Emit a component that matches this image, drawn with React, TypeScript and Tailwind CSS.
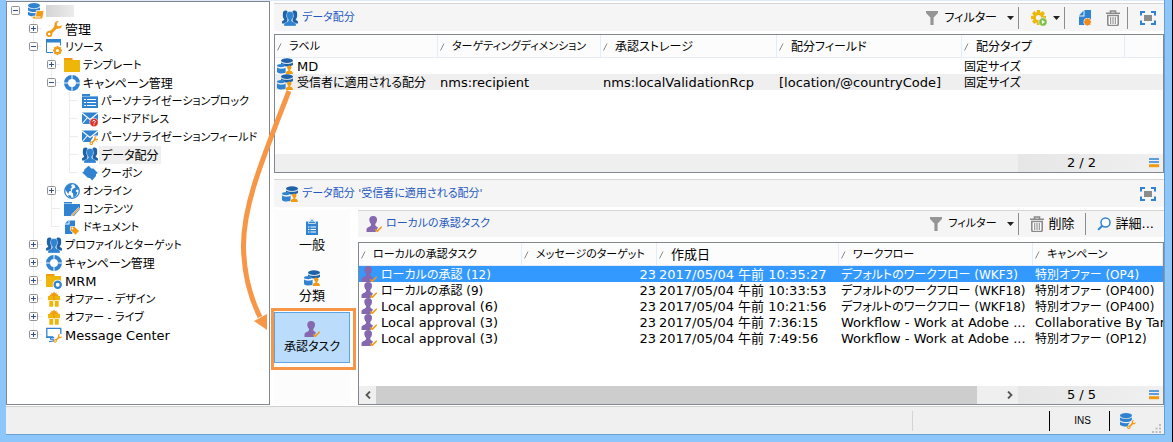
import type { ReactNode } from "react";

const BLUE = "#2f83d0";
const DARK = "#1f62a8";
const ORANGE = "#f29a12";
const YELLOW = "#efb60a";
const PURPLE = "#8568b0";

function Icon({ children, size = 16 }: { children: ReactNode; size?: number }) {
  return (
    <svg className="block shrink-0" width={size} height={size} viewBox="0 0 16 16" aria-hidden="true">
      {children}
    </svg>
  );
}

const Wrench = ({ at, color = ORANGE }: { at: string; color?: string }) => (
  <g transform={at}>
    <path d="M15.8 4.2 12.6 5.6 10.8 4.2 11 1.8 13 0.2C10.5-.3 8.3 1.5 8.4 4.2c0 .9.1 1.2-.4 1.8L5.4 9.1c-.6.6-1 .6-1.8.6C1.600 9.600 0 11.100 0 13s1.400 3.100 3.200 3.100c1.900 0 3.200-1.500 3.100-3.400 0-.7.1-1 .6-1.500l3-2.800c.6-.6 1-.6 1.800-.6 2.300.1 4.100-1.300 4.100-3.600zM3.200 14.300a1.300 1.300 0 1 1 0-2.600 1.300 1.300 0 0 1 0 2.600z" fill={color} fillRule="evenodd" />
  </g>
);

const DbDisk = () => (
  <g>
    <ellipse cx="6" cy="2.600" rx="6" ry="2.600" fill={BLUE} />
    <path d="M0 4.200c1.500 2.200 10.500 2.200 12 0v3c-1.500 2.400-10.500 2.400-12 0z" fill={BLUE} />
    <path d="M0 8.600c1.500 2.200 10.500 2.200 12 0v3.200c-1.500 2.400-10.500 2.400-12 0z" fill={BLUE} />
  </g>
);

const Gear = ({ cx, cy, r, color, hole }: { cx: number; cy: number; r: number; color: string; hole: string }) => (
  <g transform={`translate(${cx} ${cy}) scale(${r / 8})`}>
    {[0, 45, 90, 135].map((a) => (
      <rect key={a} x="-1.800" y="-8" width="3.600" height="16" fill={color} transform={`rotate(${a})`} />
    ))}
    <circle r="5.800" fill={color} />
    <circle r="2.800" fill={hole} />
  </g>
);

const RootIcon = () => (
  <Icon>
    <DbDisk />
    <path d="M8.500 7.600h7.500l-1 5.800c-.3 1.800-1.200 2.600-2.800 2.600H6c-1.400 0-1.900-1.500-1.200-2.800h2.700z" fill={ORANGE} stroke="#fff" strokeWidth=".8" />
    <path d="M7 14h5.500" stroke="#fff" strokeWidth="1" />
  </Icon>
);
const WrenchIcon = () => (
  <Icon>
    <Wrench at="" />
  </Icon>
);
const ResourceIcon = () => (
  <Icon>
    <path d="M.5 1h14v5.500M.5 1v12.500h6.500" fill="none" stroke={BLUE} strokeWidth="1" />
    <rect y="0" width="15" height="3.500" fill={BLUE} />
    <Gear cx={11.5} cy={11.5} r={4.5} color={ORANGE} hole="#fff" />
  </Icon>
);
const FolderIcon = () => (
  <Icon>
    <rect y="1" width="8.500" height="2" fill={ORANGE} />
    <rect y="3" width="16" height="12" fill={YELLOW} />
  </Icon>
);
const RingIcon = () => (
  <Icon>
    <circle cx="8" cy="8" r="6" fill="none" stroke={BLUE} strokeWidth="4" />
    <path d="M8 0v4.500M8 11.500V16M0 8h4.500M11.500 8H16" stroke="#fff" strokeWidth="1" />
  </Icon>
);
const BlockIcon = () => (
  <Icon>
    <path d="M0 1h8v2h8v12H0z" fill={BLUE} />
    <path d="M0 3.400h16" stroke="#9cc6ec" strokeWidth=".8" />
    <path d="M2 6.500h2M5 6.500h9M2 9.500h2M5 9.500h9M2 12.500h2M5 12.500h9" stroke="#fff" strokeWidth="1.200" />
  </Icon>
);
const Envelope = () => (
  <g>
    <rect y="1.500" width="16" height="11.500" fill={BLUE} />
    <path d="M0 2l8 6.500L16 2M0 13l5.500-6.500M16 13l-5.500-6.500" fill="none" stroke="#fff" strokeWidth="1.100" />
  </g>
);
const SeedIcon = () => (
  <Icon>
    <Envelope />
    <circle cx="12" cy="11.500" r="4.300" fill="#e0302c" stroke="#fff" strokeWidth=".6" />
    <path d="M10.700 10.600c0-1.700 2.700-1.500 2.600 0 0 .9-1.300.9-1.300 2M12 13.300v1" fill="none" stroke="#fff" strokeWidth="1" />
  </Icon>
);
const FieldIcon = () => (
  <Icon>
    <Envelope />
    <path d="M7 16 9.500 10.500 12 6.500h4V12l-3.500 1.500L9 16z" fill="#fff" />
    <Wrench at="translate(7.500 7) scale(.56)" />
  </Icon>
);
const PeopleIcon = () => (
  <Icon>
    <path d="M1 2.600C1.200-.2 5-.2 5.600 1.800L4.400 6l1.200 4-1 3.500H0v-1.800c.2-1.200 2.200-1.300 2.400-2.300C.4 8 .8 4.800 1 2.600zM15 2.600c-.2-2.800-4-2.800-4.600-.8L11.600 6l-1.200 4 1 3.500H16v-1.800c-.2-1.200-2.200-1.300-2.400-2.300C15.600 8 15.200 4.800 15 2.600z" fill={DARK} />
    <path d="M8 1.500c2.600 0 3.700 1.600 3.400 4.200-.2 1.800-.8 3-1.700 3.900v1.400c.4 1.200 4.300 1.200 4.300 3.500V16H2v-1.500c0-2.300 3.900-2.300 4.300-3.500V9.600C5.400 8.700 4.800 7.500 4.600 5.700 4.300 3.100 5.400 1.500 8 1.500z" fill={BLUE} stroke="#fff" strokeWidth=".3" />
  </Icon>
);
const CouponIcon = () => (
  <Icon>
    <path d="M6.600.8 9.300 3.500 11.400 3.400 15.800 8 13.900 9.200 14 11.100 10.200 15.400 8 13 5.800 12.800.2 7.600 2.200 6.200 2.300 4.400z" fill={BLUE} />
  </Icon>
);
const GlobeIcon = () => (
  <Icon>
    <circle cx="8" cy="8" r="7.300" fill="#fff" stroke={BLUE} strokeWidth="1.300" />
    <path d="M1 6c1-3 3.500-5 7-5l-1 2 1.500 1-2 1.500L7 8 5 8.500 4.500 11 2.800 9zM10 1.300C13 2 15 4 15.200 7l-2.200-.5L11.500 8 13.500 9.500 12 13l-2.500 1.500-.5-4L7.500 9l1-3 3-1.500zM4 12l3 .5.500 2.500C5.500 15 4.600 13.800 4 12z" fill={BLUE} />
  </Icon>
);
const ContentIcon = () => (
  <Icon>
    <path d="M0 1h8v1.500H0zM0 3h16v5l-6 7H0z" fill={BLUE} />
    <path d="m15.500 7.500-7 7.500-1.500 1 .5-2.200 7-7.300z" fill={ORANGE} stroke="#fff" strokeWidth=".6" />
  </Icon>
);
const DocumentIcon = () => (
  <Icon>
    <path d="M5.500 1.500H11v8L8 15H1V5.500h4.500z" fill={BLUE} />
    <path d="M1 4.500 4.500 1v3.500z" fill={BLUE} />
    <path d="M6.500 7.500h4l5 4.500-4 4-5-4.500z" fill={ORANGE} stroke="#fff" strokeWidth=".7" />
    <circle cx="8.500" cy="9.500" r=".9" fill="#fff" />
  </Icon>
);
const MrmIcon = () => (
  <Icon>
    <rect y="1" width="8.500" height="2" fill={ORANGE} />
    <rect y="3" width="15" height="11" fill={YELLOW} />
    <circle cx="11.700" cy="11.700" r="5" fill="#fff" />
    <circle cx="11.700" cy="11.700" r="3.100" fill="none" stroke={BLUE} strokeWidth="2.200" />
  </Icon>
);
const GiftIcon = () => (
  <Icon>
    <path d="M3.800 3.500 6 3.200 4.600 1.500 7 2.300 8 .2 9 2.300 11.400 1.500 10 3.200l2.200.3V5H3.800z" fill={ORANGE} />
    <path d="M2 5h12v4.200H2zM3.300 10h3.900v5.700H3.300zM8.800 10h3.900v5.700H8.800z" fill={YELLOW} />
    <path d="M7.200 5h1.600v4.200H7.200z" fill={ORANGE} />
  </Icon>
);
const MessageIcon = () => (
  <Icon>
    <path d="M7 10H.8V1.300h14V7" fill="#fff" stroke={BLUE} strokeWidth="1.300" />
    <path d="M.2 10.300h8M4.500 10.500v1.700h2.700V14L3 14.600" fill="none" stroke={BLUE} strokeWidth="1.200" />
    <Wrench at="translate(7.500 7) scale(.53)" />
  </Icon>
);
const AllocationIcon = () => (
  <Icon>
    <ellipse cx="10" cy="2.600" rx="6" ry="2.400" fill={DARK} />
    <path d="M4 4.200c1.500 2 10.500 2 12 0v2.600c-1 1.400-5 2-8 1.400L7 6.900 4 6.300z" fill={DARK} />
    <ellipse cx="4" cy="7.600" rx="4" ry="1.600" fill={BLUE} />
    <path d="M0 9.300c1 1.800 7 1.800 8.600.2v5.100C6.500 16 1.500 15.800 0 14z" fill={BLUE} />
    <circle cx="12.300" cy="9.600" r="2.200" fill={ORANGE} />
    <path d="M11.400 10.500h1.800v2.200c2 .4 2.700 1 2.700 3.300H8.700c0-2.300.7-2.900 2.700-3.300z" fill={ORANGE} />
  </Icon>
);
const TaskIcon = () => (
  <Icon>
    <path d="M7.200 0c2.800 0 4.100 1.800 3.800 4.200-.2 1.500-.8 2.800-1.700 3.600v1.500c.4 1.400 2 1.300 2.700 2.100l-2.500 4.500H.5v-2.400c0-2.500 4.100-2.400 4.500-4.200V7.800C4.100 7 3.500 5.700 3.300 4.200 3 1.800 4.400 0 7.200 0z" fill={PURPLE} />
    <path d="m9.300 13.500 2 1.800 4.400-4.600" fill="none" stroke={ORANGE} strokeWidth="1.600" />
  </Icon>
);
const ClipboardIcon = () => (
  <Icon>
    <path d="M2 2.500h12V16H2z" fill={BLUE} />
    <path d="M4.500 4.500v-2H6.200C6.300-.5 9.700-.5 9.800 2.500h1.700v2z" fill={BLUE} stroke="#fff" strokeWidth=".7" />
    <circle cx="8" cy="2.200" r=".8" fill="#fff" />
    <path d="M4 8h1.500M6.500 8H12M4 10.500h1.500M6.500 10.500H12M4 13h1.500M6.500 13H12" stroke="#fff" strokeWidth="1" />
  </Icon>
);
const FunnelIcon = () => (
  <Icon>
    <path d="M2 1h12v2L9.600 7.500V15H6.400V7.500L2 3z" fill="#959595" />
  </Icon>
);
const TrashIcon = () => (
  <Icon>
    <path d="M5.500 2.800V1h5v1.800M1 3.300h14" fill="none" stroke="#8b8b8b" strokeWidth="1.600" />
    <path d="M2.800 5.500h10.400V14c0 1-.4 1.500-1.200 1.500H4c-.8 0-1.200-.5-1.200-1.500z" fill="#fff" stroke="#8b8b8b" strokeWidth="1.600" />
    <path d="M5.700 7v7M8 7v7M10.300 7v7" stroke="#8b8b8b" strokeWidth="1.100" />
  </Icon>
);
const GearRunIcon = () => (
  <Icon>
    <Gear cx={7.500} cy={7.500} r={7.500} color={YELLOW} hole="#f5f5f5" />
    <circle cx="12" cy="12" r="4.200" fill="#7cc243" stroke="#f5f5f5" strokeWidth=".7" />
    <path d="m10.800 9.800 3.200 2.200-3.200 2.200z" fill="#fff" />
  </Icon>
);
const NewIcon = () => (
  <Icon>
    <path d="M2 5.500 6.500.5v5zM7.500 0H14v15H2V6.500h5.500z" fill={BLUE} />
    <circle cx="10.500" cy="12" r="4" fill="#f5f5f5" />
    <g transform="translate(10.500 12)" fill="#f08c1e">
      <rect x="-2.800" y="-2.800" width="5.600" height="5.600" />
      <rect x="-2.800" y="-2.800" width="5.600" height="5.600" transform="rotate(45)" />
    </g>
  </Icon>
);
const ExpandIcon = () => (
  <Icon>
    <path d="M1 5.500V2h4M11 2h4v3.500M15 10.500V14h-4M5 14H1v-3.500" fill="none" stroke={BLUE} strokeWidth="2" />
    <rect x="4" y="5" width="8" height="6" fill="#8b8b8b" />
  </Icon>
);
const SearchIcon = () => (
  <Icon>
    <circle cx="9.500" cy="6.500" r="4.500" fill="#fff" stroke={BLUE} strokeWidth="1.500" />
    <path d="m6.300 9.700-4.200 4.200" stroke={BLUE} strokeWidth="2" />
  </Icon>
);
const StatusDbIcon = () => (
  <Icon>
    <DbDisk />
    <path d="M6.500 16 8 12l4-5.500h4V12l-4 2-3 2z" fill="#f0f0f0" />
    <Wrench at="translate(7 7) scale(.56)" />
  </Icon>
);
const ListIcon = () => (
  <svg width="10" height="10" viewBox="0 0 10 10" aria-hidden="true">
    <path d="M0 1h10M0 4h10" stroke={BLUE} strokeWidth="1.600" />
    <path d="M0 7.700h10" stroke={ORANGE} strokeWidth="3" />
  </svg>
);
const Caret = () => (
  <svg className="shrink-0" width="7" height="4" viewBox="0 0 7 4" aria-hidden="true">
    <path d="M0 0h7L3.500 4z" fill="#222" />
  </svg>
);
const SortMark = () => (
  <svg className="mr-1.5 shrink-0" width="6" height="8" viewBox="0 0 6 8" aria-hidden="true">
    <path d="M.5 7.500 4 .5" stroke="#8a8a8a" strokeWidth="1" />
  </svg>
);

type Line = "none" | "through" | "tee" | "end";

function Connector({ line, box }: { line: Line; box?: "+" | "-" }) {
  return (
    <svg className="block shrink-0" width="18" height="18" viewBox="0 0 18 18" aria-hidden="true">
      {(line === "through" || line === "tee") && <path d="M9.500 0v18" stroke="#ececec" />}
      {line === "end" && <path d="M9.500 0v9" stroke="#ececec" />}
      {(line === "tee" || line === "end") && <path d="M9 8.500h9" stroke="#ececec" />}
      {box && (
        <g>
          <rect x="5.500" y="4.500" width="8" height="8" rx="1" fill="#fafafa" stroke="#919191" />
          <path d={box === "+" ? "M7 8.500h5M9.500 6v5" : "M7 8.500h5"} stroke="#33518f" />
        </g>
      )}
    </svg>
  );
}

type Node = { icon: ReactNode; label: string; small?: boolean; lines: Line[]; box?: "+" | "-"; selected?: boolean };

const tree: Node[] = [
  { icon: <WrenchIcon />, label: "管理", lines: ["none", "tee"], box: "+" },
  { icon: <ResourceIcon />, label: "リソース", small: true, lines: ["none", "tee"], box: "-" },
  { icon: <FolderIcon />, label: "テンプレート", small: true, lines: ["none", "through", "tee"], box: "+" },
  { icon: <RingIcon />, label: "キャンペーン管理", lines: ["none", "through", "tee"], box: "-" },
  { icon: <BlockIcon />, label: "パーソナライゼーションブロック", small: true, lines: ["none", "through", "through", "tee"] },
  { icon: <SeedIcon />, label: "シードアドレス", small: true, lines: ["none", "through", "through", "tee"] },
  { icon: <FieldIcon />, label: "パーソナライゼーションフィールド", small: true, lines: ["none", "through", "through", "tee"] },
  { icon: <PeopleIcon />, label: "データ配分", lines: ["none", "through", "through", "tee"], selected: true },
  { icon: <CouponIcon />, label: "クーポン", small: true, lines: ["none", "through", "through", "end"] },
  { icon: <GlobeIcon />, label: "オンライン", small: true, lines: ["none", "through", "tee"], box: "+" },
  { icon: <ContentIcon />, label: "コンテンツ", small: true, lines: ["none", "through", "tee"] },
  { icon: <DocumentIcon />, label: "ドキュメント", small: true, lines: ["none", "through", "end"] },
  { icon: <PeopleIcon />, label: "プロファイルとターゲット", small: true, lines: ["none", "tee"], box: "+" },
  { icon: <RingIcon />, label: "キャンペーン管理", lines: ["none", "tee"], box: "+" },
  { icon: <MrmIcon />, label: "MRM", lines: ["none", "tee"], box: "+" },
  { icon: <GiftIcon />, label: "オファー - デザイン", small: true, lines: ["none", "tee"], box: "+" },
  { icon: <GiftIcon />, label: "オファー - ライブ", small: true, lines: ["none", "tee"], box: "+" },
  { icon: <MessageIcon />, label: "Message Center", lines: ["none", "end"], box: "+" },
];

// Latin-only and kanji-only labels are set one step larger than mixed text.
const isLarge = (s: string) => /^([\x00-\x7f]*|[\u4e00-\u9fff]+)$/.test(s);
const sizeOf = (s: string, small?: boolean) => (isLarge(s) ? "text-[13px]" : small ? "text-[11px]" : "text-xs");

function Tree() {
  return (
    <nav aria-label="エクスプローラー" className="w-[264px] shrink-0 overflow-hidden border border-[#828790] bg-white">
      <ul className="-ml-px">
        <li className="flex h-[18px] items-center">
          <Connector line="none" box="-" />
          <span className="ml-1">
            <RootIcon />
          </span>
          <span className="ml-0.5 h-3 w-7 bg-linear-to-r from-[#d4d4d4] to-[#ececec]" />
        </li>
        {tree.map((n, i) => (
          <li key={i} className="flex h-[18px] items-center whitespace-nowrap">
            {n.lines.map((l, j) => (
              <Connector key={j} line={l} box={j === n.lines.length - 1 ? n.box : undefined} />
            ))}
            <a href="#" className="ml-1 flex items-center">
              {n.icon}
              <span className={`ml-px px-0.5 pt-0.5 leading-4 ${sizeOf(n.label, n.small)} ${n.selected ? "bg-[#efefef]" : ""}`}>{n.label}</span>
            </a>
          </li>
        ))}
      </ul>
    </nav>
  );
}

const Divider = () => <span className="h-[22px] w-px shrink-0 bg-[#8c8c8c]" />;

function Title({ icon, children }: { icon: ReactNode; children: ReactNode }) {
  return (
    <h2 className="flex min-w-0 flex-1 items-center gap-1 pl-2 text-[11px] text-[#2458c0]">
      {icon}
      <span className="truncate">{children}</span>
    </h2>
  );
}

function FilterButton({ compact }: { compact?: boolean }) {
  return (
    <button className={`flex items-center gap-1 ${compact ? "text-[11px]" : "text-xs"}`}>
      <FunnelIcon />
      <span className="mr-1.5">フィルター</span>
      <Caret />
    </button>
  );
}

function CountBar({ count, children }: { count: string; children?: ReactNode }) {
  return (
    <div className="flex h-[18px] shrink-0 items-stretch bg-[#efefef]">
      <div className="flex min-w-0 flex-1 items-center">{children}</div>
      <div className="flex w-[145px] shrink-0 items-center bg-linear-to-r from-[#e6e6e6] to-[#f0f0f0] pr-1 text-[13px]">
        <span className="flex-1 pr-1 text-center">{count}</span>
        <button aria-label="表示設定">
          <ListIcon />
        </button>
      </div>
    </div>
  );
}

function HeadCell({ children, small = true }: { children: string; small?: boolean }) {
  return (
    <th className={`h-[23px] overflow-hidden border-r border-b border-[#e3ecf7] bg-[#fcfcfc] p-0 pt-0.5 pl-0.5 text-left font-normal ${sizeOf(children, small)}`}>
      <button className="flex items-center whitespace-nowrap">
        <SortMark />
        <span>{children}</span>
      </button>
    </th>
  );
}

const allocations = [
  ["MD", "", "", "", "固定サイズ"],
  ["受信者に適用される配分", "nms:recipient", "nms:localValidationRcp", "[location/@countryCode]", "固定サイズ"],
];

function AllocationTable() {
  return (
    <div className="mt-[3px] flex h-[139px] shrink-0 flex-col border border-[#828790] bg-white">
      <div className="flex-1 overflow-hidden">
        <table className="w-full table-fixed border-separate border-spacing-0">
          <colgroup>
            <col className="w-[163px]" />
            <col className="w-[163px]" />
            <col className="w-[176px]" />
            <col className="w-[185px]" />
            <col className="w-[163px]" />
            <col />
          </colgroup>
          <thead>
            <tr>
              <HeadCell>ラベル</HeadCell>
              <HeadCell>ターゲティングディメンション</HeadCell>
              <HeadCell small={false}>承認ストレージ</HeadCell>
              <HeadCell small={false}>配分フィールド</HeadCell>
              <HeadCell small={false}>配分タイプ</HeadCell>
              <td className="border-b border-[#e3ecf7] bg-[#fcfcfc]" />
            </tr>
          </thead>
          <tbody>
            {allocations.map((row, i) => (
              <tr key={i} className={i === 1 ? "bg-[#efefef]" : ""}>
                {row.map((c, j) => (
                  <td key={j} className={`h-4 overflow-hidden p-0 pl-0.5 leading-4 whitespace-nowrap ${sizeOf(c)}`}>
                    {j === 0 ? (
                      <span className="flex items-center gap-1">
                        <AllocationIcon />
                        <span className="pt-0.5 leading-[14px]">{c}</span>
                      </span>
                    ) : (
                      <span className="block pt-0.5 leading-[14px]">{c}</span>
                    )}
                  </td>
                ))}
                <td className="p-0" />
              </tr>
            ))}
          </tbody>
        </table>
      </div>
      <CountBar count="2 / 2" />
    </div>
  );
}

const tasks = [
  ["ローカルの承認 (12)", "23", "2017/05/04 午前 10:35:27", "デフォルトのワークフロー (WKF3)", "特別オファー (OP4)"],
  ["ローカルの承認 (9)", "23", "2017/05/04 午前 10:33:53", "デフォルトのワークフロー (WKF18)", "特別オファー (OP400)"],
  ["Local approval (6)", "23", "2017/05/04 午前 10:21:56", "デフォルトのワークフロー (WKF18)", "特別オファー (OP400)"],
  ["Local approval (3)", "23", "2017/05/04 午前 7:36:15", "Workflow - Work at Adobe ...", "Collaborative By Tar"],
  ["Local approval (3)", "23", "2017/05/04 午前 7:49:56", "Workflow - Work at Adobe ...", "特別オファー (OP12)"],
];

function TaskTable() {
  return (
    <div className="mt-[5px] flex min-h-[163px] flex-1 flex-col border border-[#828790] bg-white">
      <div className="flex-1 overflow-hidden">
        <table className="w-full table-fixed border-separate border-spacing-0">
          <colgroup>
            <col className="w-[163px]" />
            <col className="w-[135px]" />
            <col className="w-[182px]" />
            <col className="w-[194px]" />
            <col />
          </colgroup>
          <thead>
            <tr>
              <HeadCell>ローカルの承認タスク</HeadCell>
              <HeadCell>メッセージのターゲット</HeadCell>
              <HeadCell>作成日</HeadCell>
              <HeadCell>ワークフロー</HeadCell>
              <HeadCell>キャンペーン</HeadCell>
            </tr>
          </thead>
          <tbody>
            {tasks.map((row, i) => (
              <tr key={i} className={i === 0 ? "bg-[#3399ff] text-white" : ""}>
                {row.map((c, j) => (
                  <td
                    key={j}
                    className={`h-4 overflow-hidden p-0 leading-4 whitespace-nowrap ${j === 1 ? "pr-px text-right" : "pl-0.5"} ${j === 2 ? "text-[13px]" : sizeOf(c)}`}
                  >
                    {j === 0 ? (
                      <span className="flex items-center gap-1">
                        <TaskIcon />
                        <span className="pt-0.5 leading-[14px]">{c}</span>
                      </span>
                    ) : (
                      <span className="block pt-0.5 leading-[14px]">{c}</span>
                    )}
                  </td>
                ))}
              </tr>
            ))}
          </tbody>
        </table>
      </div>
      <CountBar count="5 / 5">
        <button aria-label="左へスクロール" className="flex w-[17px] justify-center">
          <svg width="6" height="8" viewBox="0 0 6 8">
            <path d="M5 .5 1.500 4 5 7.500" fill="none" stroke="#555" strokeWidth="1.800" />
          </svg>
        </button>
        <div className="flex h-full flex-1 pr-6">
          <div className="h-full w-full bg-[#cdcdcd]" />
        </div>
        <button aria-label="右へスクロール" className="flex w-[17px] justify-center">
          <svg width="6" height="8" viewBox="0 0 6 8">
            <path d="M1 .5 4.500 4 1 7.500" fill="none" stroke="#555" strokeWidth="1.800" />
          </svg>
        </button>
      </CountBar>
    </div>
  );
}

const sections = [
  { label: "一般", icon: <ClipboardIcon /> },
  { label: "分類", icon: <AllocationIcon /> },
  { label: "承認タスク", icon: <TaskIcon />, active: true },
];

function SideTabs() {
  return (
    <div className="mr-2 flex w-[76px] shrink-0 flex-col bg-[#fcfcfc]">
      {sections.map((s) => (
        <button
          key={s.label}
          className={`relative flex h-[51px] flex-col items-center justify-center gap-0.5 border ${sizeOf(s.label)} ${s.active ? "border-[#5fa4e4] bg-[#bbdcfb]" : "border-transparent"}`}
        >
          {s.icon}
          <span className="leading-4">{s.label}</span>
          {s.active && <span className="absolute -top-[5px] -right-[7px] -bottom-2 -left-1 border-3 border-[#f79646]" />}
        </button>
      ))}
    </div>
  );
}

function FlowArrow() {
  return (
    <svg className="pointer-events-none absolute top-0 left-0" width="300" height="340" viewBox="0 0 300 340" aria-hidden="true">
      <path d="M289 91C263 158 243 205 243.500 247C244 275 251 299 260 317" fill="none" stroke="#f79646" strokeWidth="5" />
      <path d="M254 321 267 314 267 330z" fill="#f79646" />
    </svg>
  );
}

export default function App() {
  return (
    <div
      lang="ja"
      className="relative flex min-h-screen flex-col border-r border-b-2 border-black bg-[#8dc6fa] pr-[7px] pb-[7px] pl-1.5 font-['DejaVu_Sans','Noto_Sans_CJK_JP',sans-serif] text-xs leading-4 text-black [font-feature-settings:'palt']"
    >
      <div className="flex flex-1 flex-col border-r border-b border-[#6a9fce] bg-white">
        <main className="flex flex-1 border-t border-[#dfeaf8]">
          <Tree />
          <div className="ml-1 flex min-w-0 flex-1 flex-col pt-0.5">
            <header className="flex h-7 items-center border-t border-[#d5d5d5] bg-[#f5f5f5]">
              <Title icon={<PeopleIcon />}>データ配分</Title>
              <div className="flex shrink-0 items-center pr-2">
                <FilterButton />
                <span className="w-1" />
                <Divider />
                <button aria-label="アクション" className="mx-1 flex items-center gap-1.5 pl-2">
                  <GearRunIcon />
                  <Caret />
                </button>
                <Divider />
                <button aria-label="新規" className="ml-3">
                  <NewIcon />
                </button>
                <button aria-label="削除" className="mr-1.5 ml-3">
                  <TrashIcon />
                </button>
                <Divider />
                <button aria-label="全画面" className="ml-3">
                  <ExpandIcon />
                </button>
              </div>
            </header>
            <AllocationTable />
            <header className="mt-1.5 flex h-7 shrink-0 items-center border-t border-[#d5d5d5] bg-[#f5f5f5]">
              <Title icon={<AllocationIcon />}>データ配分 '受信者に適用される配分'</Title>
              <button aria-label="全画面" className="mr-2">
                <ExpandIcon />
              </button>
            </header>
            <div className="mt-[3px] flex flex-1">
              <SideTabs />
              <div className="flex min-w-0 flex-1 flex-col">
                <header className="flex h-[27px] shrink-0 items-center border-t border-[#d5d5d5] bg-[#f5f5f5]">
                  <Title icon={<TaskIcon />}>ローカルの承認タスク</Title>
                  <div className="flex shrink-0 items-center gap-1 pr-2.5 text-[13px]">
                    <FilterButton compact />
                    <Divider />
                    <button className="flex items-center gap-1 pr-1.5 pl-1.5">
                      <TrashIcon />
                      <span>削除</span>
                    </button>
                    <Divider />
                    <button className="flex items-center gap-1 pl-1.5">
                      <SearchIcon />
                      <span>詳細...</span>
                    </button>
                  </div>
                </header>
                <TaskTable />
              </div>
            </div>
          </div>
        </main>
        <footer className="mt-px flex h-7 shrink-0 items-center justify-end border-t border-[#cfcfcf] bg-[#f0f0f0]">
          <span className="mr-[136px] h-5 w-px bg-[#d4d4d4]" />
          <span className="h-5 w-px bg-black" />
          <span className="w-[59px] pl-1.5 text-center font-['Liberation_Sans',sans-serif] text-[10px]">INS</span>
          <span className="mr-2.5 h-5 w-px bg-black" />
          <StatusDbIcon />
          <svg className="mr-0.5 ml-4 self-end" width="10" height="10" viewBox="0 0 10 10" aria-hidden="true">
            <path d="M7 0h2v2H7zM7 3.500h2v2H7zM3.500 3.500h2v2h-2zM7 7h2v2H7zM3.500 7h2v2h-2zM0 7h2v2H0z" fill="#bdbdbd" />
          </svg>
        </footer>
      </div>
      <FlowArrow />
    </div>
  );
}
